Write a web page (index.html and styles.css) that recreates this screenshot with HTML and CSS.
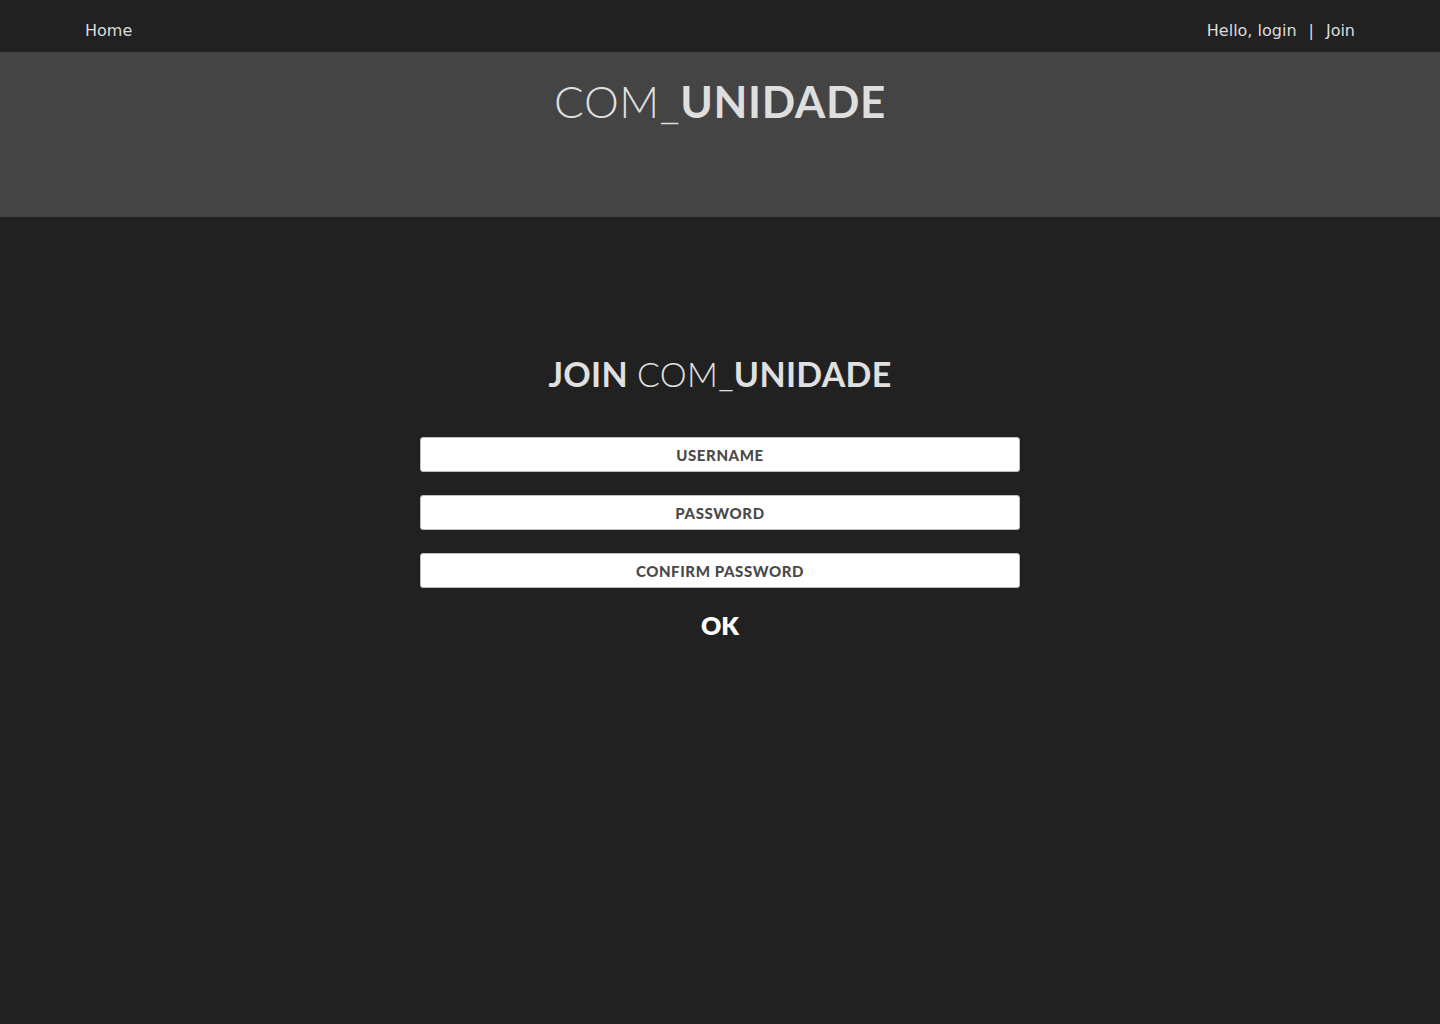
FILE: index.html
```html
<!DOCTYPE html>
<html lang="en">
<head>
<meta charset="utf-8">
<title>Join COM_UNIDADE</title>
<link rel="stylesheet" href="styles.css">
</head>
<body>
<nav class="topnav">
  <a class="nav-link" href="#">Home</a>
  <div class="nav-right">
    <a class="nav-link" href="#">Hello, login</a>
    <span class="sep">|</span>
    <a class="nav-link" href="#">Join</a>
  </div>
</nav>
<header class="banner">
  <h1 class="logo"><span class="light">COM_</span><span class="bold">UNIDADE</span></h1>
</header>
<main class="content">
  <h2 class="form-title"><span class="bold">JOIN</span> <span class="light">COM_</span><span class="bold">UNIDADE</span></h2>
  <form class="join-form">
    <input class="field" type="text" placeholder="USERNAME">
    <input class="field" type="password" placeholder="PASSWORD">
    <input class="field" type="password" placeholder="CONFIRM PASSWORD">
    <button class="ok" type="button">OK</button>
  </form>
</main>
</body>
</html>
```

FILE: styles.css
```css
html, body {
  margin: 0;
  padding: 0;
  background: #212121;
  height: 100%;
}
body {
  font-family: "DejaVu Sans", sans-serif;
}
.topnav {
  height: 52px;
  background: #212121;
  display: flex;
  align-items: center;
  justify-content: space-between;
  padding: 8px 85px 0;
  box-sizing: border-box;
  font-size: 16px;
  color: #dcdcdc;
}
.nav-link {
  color: #dcdcdc;
  text-decoration: none;
}
.nav-right {
  display: flex;
  align-items: center;
  gap: 12px;
}
.sep { color: #dcdcdc; }
.banner {
  height: 165px;
  background: #444444;
  display: flex;
  justify-content: center;
  align-items: flex-start;
}
.logo {
  margin: 23px 0 0;
  font-family: "Lato", sans-serif;
  font-size: 44px;
  line-height: 52px;
  color: #dedede;
  letter-spacing: 0.6px;
  font-weight: normal;
}
.light { font-weight: 300; }
.bold { font-weight: 700; }
.content {
  display: flex;
  flex-direction: column;
  align-items: center;
  padding-top: 136px;
}
.form-title {
  margin: 0;
  font-family: "Lato", sans-serif;
  font-size: 34px;
  line-height: 42px;
  color: #e0e0e0;
  font-weight: normal;
  letter-spacing: 0.3px;
}
.join-form {
  margin-top: 42px;
  display: flex;
  flex-direction: column;
  align-items: center;
  gap: 23px;
}
.field {
  width: 600px;
  height: 35px;
  box-sizing: border-box;
  border: 1px solid #bdbdbd;
  border-radius: 3px;
  background: #ffffff;
  text-align: center;
  font-family: "Lato", sans-serif;
  font-weight: 900;
  font-size: 15px;
  color: #444;
  margin: 0;
  padding: 0;
  letter-spacing: 0.6px;
}
.field::placeholder {
  color: #4a4a4a;
  opacity: 1;
  letter-spacing: 0.6px;
}
.ok {
  margin-top: -1px;
  background: none;
  border: none;
  color: #ffffff;
  font-family: "Lato", sans-serif;
  font-weight: 800;
  font-size: 25px;
  line-height: 30px;
  padding: 0;
  cursor: pointer;
}
```
